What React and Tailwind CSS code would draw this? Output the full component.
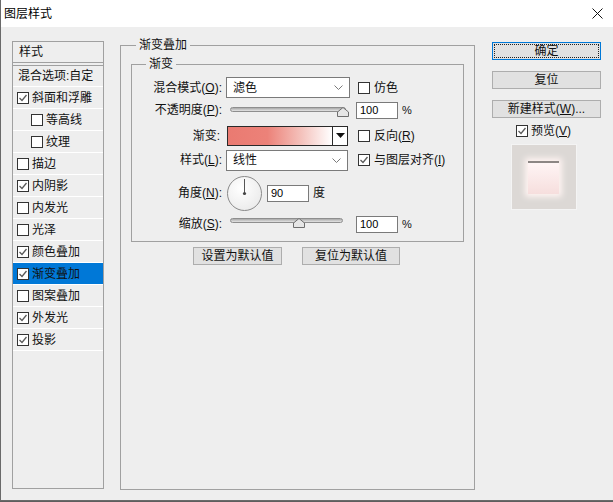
import React from "react";

const Check = ({ checked, className = "" }) => (
  <span className={`flex h-[12px] w-[12px] shrink-0 items-center justify-center border border-[#333333] bg-white ${className}`}>
    {checked && (
      <svg width="10" height="10" viewBox="0 0 10 10">
        <polyline points="1.5,5 4,7.5 8.5,2" fill="none" stroke="#5a5a5a" strokeWidth="1.3" />
      </svg>
    )}
  </span>
);

const U = ({ children }) => <span className="underline">{children}</span>;

const Slider = ({ pos, w = 116 }) => (
  <div className="relative h-[12px]" style={{ width: w }}>
    <div className="absolute left-0 right-0 top-[2px] h-[5px] rounded-full border border-[#8e8e8e] bg-gradient-to-b from-[#a9a9a9] to-[#e4e4e4]" />
    <svg className="absolute top-[2px]" style={{ left: pos - 5 }} width="12" height="10" viewBox="0 0 12 10">
      <path d="M0.5 9.5 L0.5 5 L6 0.5 L11.5 5 L11.5 9.5 Z" fill="#e6e6e6" stroke="#6e6e6e" />
    </svg>
  </div>
);

const Num = ({ v, w = "w-[42px]" }) => (
  <div className={`flex h-[17px] ${w} items-center border border-[#7a7a7a] bg-white pl-[3px] text-[11px] text-black`}>{v}</div>
);

const Sel = ({ v, w }) => (
  <div className={`flex h-[21px] ${w} items-center justify-between border border-[#7a7a7a] bg-white pl-[6px] pr-[6px]`}>
    <span>{v}</span>
    <svg width="9" height="5" viewBox="0 0 9 5">
      <path d="M0.5 0.5 L4.5 4.5 L8.5 0.5" fill="none" stroke="#7a7a7a" />
    </svg>
  </div>
);

const Btn = ({ children, w, primary }) => (
  <div className={`flex h-[18px] ${w} items-center justify-center border ${primary ? "border-[#0078d7] bg-[#e1e1e1] p-[1px]" : "border-[#adadad] bg-[#e1e1e1]"} text-[12px]`}>
    {primary ? (
      <div className="flex h-full w-full items-center justify-center border border-dotted border-[#222]">{children}</div>
    ) : (
      children
    )}
  </div>
);

const items = [
  ["斜面和浮雕", true, 0],
  ["等高线", false, 1],
  ["纹理", false, 1],
  ["描边", false, 0],
  ["内阴影", true, 0],
  ["内发光", false, 0],
  ["光泽", false, 0],
  ["颜色叠加", true, 0],
  ["渐变叠加", true, 0, true],
  ["图案叠加", false, 0],
  ["外发光", true, 0],
  ["投影", true, 0],
];

export default function App() {
  return (
    <div className="h-[502px] w-[613px] overflow-hidden bg-[#5e5e5e] font-['Liberation_Sans','Noto_Sans_CJK_SC',sans-serif] text-[12px] leading-[16px] text-[#111]">
      <div className="flex h-[501px] w-[613px] flex-col border-b border-l border-[#6a6a6a] bg-[#eeeeee]">
        {/* title bar */}
        <div className="flex h-[27px] shrink-0 items-center justify-between bg-white pl-[3px] pr-[10px]">
          <span className="text-[12px] text-black">图层样式</span>
          <svg width="11" height="11" viewBox="0 0 11 11">
            <path d="M0.5 0.5 L10.5 10.5 M10.5 0.5 L0.5 10.5" stroke="#111" strokeWidth="1" />
          </svg>
        </div>

        {/* body */}
        <div className="flex items-start pl-[11px] pt-[14px]">
          {/* left list */}
          <div className="flex h-[448px] w-[92px] shrink-0 flex-col border border-[#a0a0a0]">
            <div className="flex h-[21px] items-center border-b border-[#a0a0a0] pl-[6px]">样式</div>
            <div className="h-[2px]" />
            <div className="flex h-[22px] items-center border-b border-t border-b-white border-t-[#a0a0a0] pl-[5px]">混合选项:自定</div>
            {items.map(([label, checked, indent, active]) => (
              <div
                key={label}
                className={`flex h-[22px] items-center gap-[3px] border-b border-white ${indent ? "pl-[18px]" : "pl-[4px]"} ${active ? "bg-[#0078d7]" : ""}`}
              >
                <Check checked={checked} />
                <span>{label}</span>
              </div>
            ))}
          </div>

          {/* main group */}
          <fieldset className="-mt-[4px] ml-[16px] h-[453px] w-[355px] shrink-0 border border-[#a0a0a0]">
            <legend className="ml-[15px] px-[3px] leading-[16px]">渐变叠加</legend>
            <fieldset className="mx-[10px] mt-[3px] h-[186px] border border-[#a0a0a0]">
              <legend className="ml-[14px] px-[3px] leading-[16px]">渐变</legend>
              <div className="flex flex-col pt-[5px]">
                {/* row 1 */}
                <div className="flex h-[21px] items-center">
                  <div className="w-[90px] text-right">混合模式(<U>O</U>):</div>
                  <div className="ml-[4px]"><Sel v="滤色" w="w-[124px]" /></div>
                  <Check className="ml-[8px]" />
                  <span className="ml-[4px]">仿色</span>
                </div>
                {/* row 2 */}
                <div className="flex h-[24px] items-center">
                  <div className="w-[90px] text-right">不透明度(<U>P</U>):</div>
                  <div className="ml-[8px] mt-[2px]"><Slider pos={112} w={116} /></div>
                  <div className="ml-[10px]"><Num v="100" /></div>
                  <span className="ml-[4px] text-[11px]">%</span>
                </div>
                {/* row 3 */}
                <div className="flex h-[27px] items-center">
                  <div className="w-[88px] text-right">渐变:</div>
                  <div className="ml-[7px] flex h-[20px] w-[121px] border border-[#2a2a2a] bg-white">
                    <div className="h-full flex-1 bg-[linear-gradient(to_right,#ea7a71_0%,#ec8279_38%,#f4c1bb_70%,#ffffff_100%)]" />
                    <div className="flex w-[15px] items-center justify-center border-l border-[#2a2a2a]">
                      <svg width="9" height="5" viewBox="0 0 9 5"><path d="M0 0 L9 0 L4.5 5 Z" fill="#111" /></svg>
                    </div>
                  </div>
                  <Check className="ml-[10px]" />
                  <span className="ml-[4px]">反向(<U>R</U>)</span>
                </div>
                {/* row 4 */}
                <div className="flex h-[22px] items-center">
                  <div className="w-[90px] text-right">样式(<U>L</U>):</div>
                  <div className="ml-[4px]"><Sel v="线性" w="w-[122px]" /></div>
                  <Check checked className="ml-[10px]" />
                  <span className="ml-[4px]">与图层对齐(<U>I</U>)</span>
                </div>
                {/* row 5 */}
                <div className="flex h-[44px] items-center">
                  <div className="w-[90px] text-right">角度(<U>N</U>):</div>
                  <div className="relative ml-[5px] h-[35px] w-[35px] rounded-full border border-[#8a8a8a] bg-[radial-gradient(circle_at_40%_35%,#ffffff,#e6e6e6)]">
                    <svg className="absolute left-0 top-0" width="33" height="33" viewBox="0 0 33 33">
                      <line x1="16.5" y1="2" x2="16.5" y2="16.5" stroke="#555" strokeWidth="1" />
                      <circle cx="16.5" cy="16.5" r="1.6" fill="#444" />
                    </svg>
                  </div>
                  <div className="ml-[5px]"><Num v="90" /></div>
                  <span className="ml-[4px]">度</span>
                </div>
                {/* row 6 */}
                <div className="flex h-[18px] items-center">
                  <div className="w-[90px] text-right">缩放(<U>S</U>):</div>
                  <div className="ml-[8px] -mt-[4px]"><Slider pos={68} w={113} /></div>
                  <div className="ml-[13px]"><Num v="100" /></div>
                  <span className="ml-[4px] text-[11px]">%</span>
                </div>
              </div>
            </fieldset>
            <div className="mt-[5px] flex justify-center gap-[20px] pr-[2px]">
              <Btn w="w-[89px]">设置为默认值</Btn>
              <Btn w="w-[98px]">复位为默认值</Btn>
            </div>
          </fieldset>

          {/* right column */}
          <div className="ml-[17px] mt-[1px] flex w-[109px] shrink-0 flex-col items-center">
            <Btn w="w-[109px]" primary>确定</Btn>
            <div className="mt-[11px]"><Btn w="w-[109px]">复位</Btn></div>
            <div className="mt-[11px]"><Btn w="w-[109px]">新建样式(<U>W</U>)...</Btn></div>
            <div className="mt-[5px] flex items-center gap-[3px] pr-[6px]">
              <Check checked />
              <span>预览(<U>V</U>)</span>
            </div>
            <div className="mr-[6px] mt-[5px] flex h-[66px] w-[66px] items-center justify-center border border-[#f4f4f4] bg-[#dcd8d5]">
              <div className="flex h-[33px] w-[31px] flex-col bg-[linear-gradient(to_bottom,#fff6f6,#f6dedd)] shadow-[0_0_6px_3px_#fff4f2]">
                <div className="h-[2px] bg-[#8c8684]" />
              </div>
            </div>
          </div>
        </div>
      </div>
    </div>
  );
}
